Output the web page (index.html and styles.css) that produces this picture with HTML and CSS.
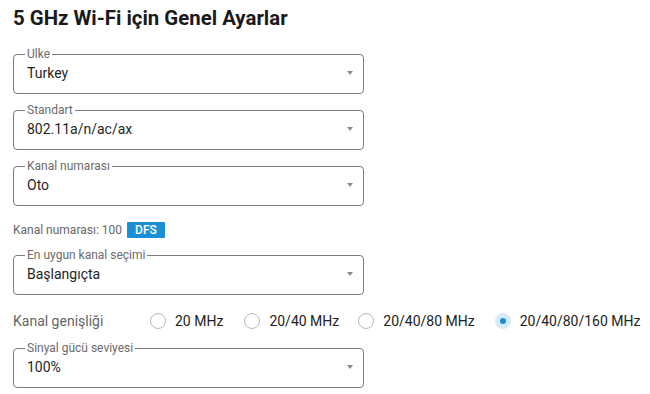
FILE: index.html
```html
<!DOCTYPE html>
<html lang="tr">
<head>
<meta charset="utf-8">
<link rel="stylesheet" href="styles.css">
</head>
<body>
<div class="page">
  <h1 class="title">5 GHz Wi-Fi için Genel Ayarlar</h1>

  <fieldset class="select">
    <legend class="select-label">Ulke</legend>
    <div class="select-row"><span class="select-value">Turkey</span><span class="caret"></span></div>
  </fieldset>

  <fieldset class="select">
    <legend class="select-label">Standart</legend>
    <div class="select-row"><span class="select-value">802.11a/n/ac/ax</span><span class="caret"></span></div>
  </fieldset>

  <fieldset class="select">
    <legend class="select-label">Kanal numarası</legend>
    <div class="select-row"><span class="select-value">Oto</span><span class="caret"></span></div>
  </fieldset>

  <div class="channel-info">
    <span>Kanal numarası: 100</span>
    <span class="badge">DFS</span>
  </div>

  <fieldset class="select">
    <legend class="select-label">En uygun kanal seçimi</legend>
    <div class="select-row"><span class="select-value">Başlangıçta</span><span class="caret"></span></div>
  </fieldset>

  <div class="radio-row">
    <span class="radio-title">Kanal genişliği</span>
    <label class="radio r1"><span class="dot"></span><span>20 MHz</span></label>
    <label class="radio r2"><span class="dot"></span><span>20/40 MHz</span></label>
    <label class="radio r3"><span class="dot"></span><span>20/40/80 MHz</span></label>
    <label class="radio r4 checked"><span class="dot"></span><span>20/40/80/160 MHz</span></label>
  </div>

  <fieldset class="select">
    <legend class="select-label">Sinyal gücü seviyesi</legend>
    <div class="select-row"><span class="select-value">100%</span><span class="caret"></span></div>
  </fieldset>
</div>
</body>
</html>
```

FILE: styles.css
```css
* { box-sizing: border-box; }
html, body {
  margin: 0;
  padding: 0;
  background: #ffffff;
  font-family: Roboto, "Liberation Sans", Arial, sans-serif;
  color: #222;
}
.page {
  padding: 4px 13px 0 13px;
  width: 650px;
}
.title {
  margin: 0 0 16px 0;
  font-size: 20.4px;
  line-height: 28px;
  font-weight: 700;
  color: #1a1a1a;
}
.select {
  margin: 0 0 10px 0;
  width: 351px;
  height: 46px;
  border: 1px solid #7d7d7d;
  border-radius: 4px;
  padding: 0 10px 0 13px;
  min-inline-size: 0;
}
.select-label {
  padding: 0 2px;
  margin-left: -2px;
  font-size: 12px;
  line-height: 12px;
  color: #6b6b6b;
  white-space: nowrap;
}
.select-row {
  display: flex;
  align-items: center;
  justify-content: space-between;
  height: 26px;
}
.select-value {
  font-size: 14px;
  color: #1f1f1f;
}
.caret {
  width: 0;
  height: 0;
  border-left: 3px solid transparent;
  border-right: 3px solid transparent;
  border-top: 4px solid #8a8a8a;
}
.channel-info {
  display: flex;
  align-items: center;
  gap: 5px;
  height: 28px;
  margin: 0 0 5px 0;
  font-size: 12px;
  color: #666;
}
.badge {
  background: #1a8fd6;
  color: #fff;
  font-size: 12px;
  font-weight: 500;
  line-height: 16px;
  padding: 0 8px;
  border-radius: 1px;
}
.radio-row {
  display: flex;
  align-items: center;
  height: 32px;
  margin: 0 0 5px 0;
  font-size: 14px;
  white-space: nowrap;
}
.radio-title {
  color: #666;
  width: 137px;
  flex: none;
}
.radio {
  display: flex;
  align-items: center;
  gap: 9px;
  color: #222;
  flex: none;
}
.r1 { margin-right: 21px; }
.r2 { margin-right: 19px; }
.r3 { margin-right: 20px; }
.dot {
  width: 16px;
  height: 16px;
  border-radius: 50%;
  border: 1px solid #b9b9b9;
  background: #fff;
  display: flex;
  align-items: center;
  justify-content: center;
  flex: none;
}
.checked .dot {
  border: none;
  background: #d8ebf8;
}
.checked .dot::after {
  content: "";
  width: 6px;
  height: 6px;
  border-radius: 50%;
  background: #1a8fd6;
}
```
